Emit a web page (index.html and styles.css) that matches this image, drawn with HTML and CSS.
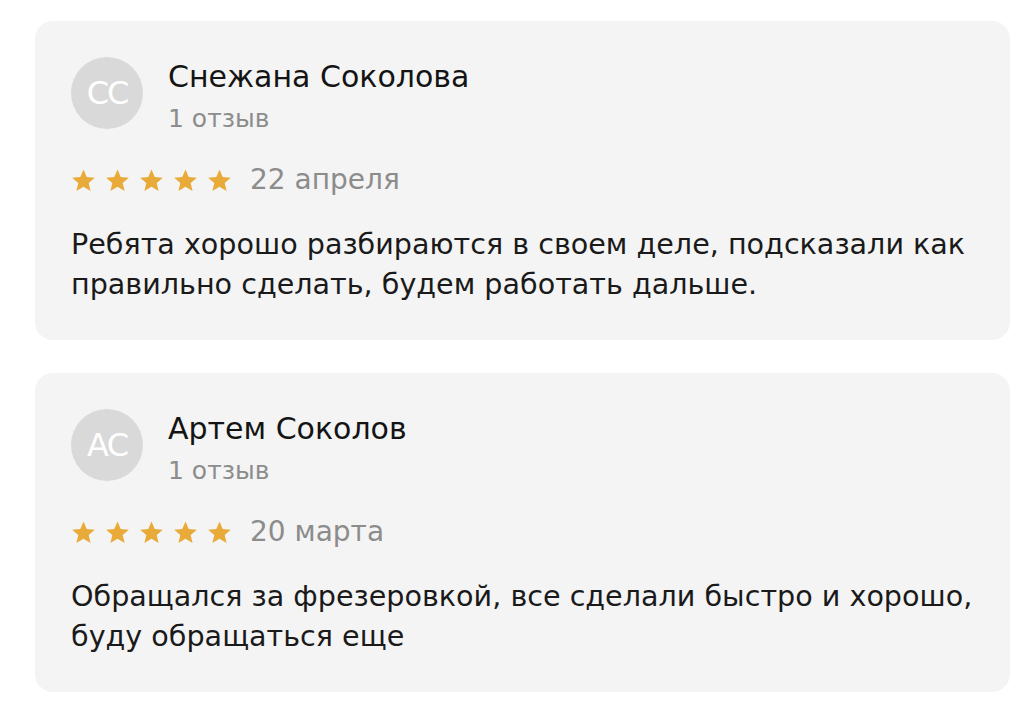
FILE: index.html
```html
<!DOCTYPE html>
<html lang="ru">
<head>
    <meta charset="UTF-8">
    <meta name="viewport" content="width=device-width, initial-scale=1.0">
    <title>Отзывы</title>
    <link rel="stylesheet" href="styles.css">
</head>
<body>
<div class="reviews">
    <div class="review-card">
        <div class="review-author">
            <div class="avatar">СС</div>
            <div class="author-info">
                <div class="author-name">Снежана Соколова</div>
                <div class="author-count">1 отзыв</div>
            </div>
        </div>
        <div class="review-meta">
            <div class="stars">
                <svg viewBox="0 0 24 24"><path d="M12 1.5l3.1 7.2 7.8.6-5.9 5.1 1.8 7.6L12 17.9 5.2 22l1.8-7.6L1.1 9.3l7.8-.6z"/></svg>
                <svg viewBox="0 0 24 24"><path d="M12 1.5l3.1 7.2 7.8.6-5.9 5.1 1.8 7.6L12 17.9 5.2 22l1.8-7.6L1.1 9.3l7.8-.6z"/></svg>
                <svg viewBox="0 0 24 24"><path d="M12 1.5l3.1 7.2 7.8.6-5.9 5.1 1.8 7.6L12 17.9 5.2 22l1.8-7.6L1.1 9.3l7.8-.6z"/></svg>
                <svg viewBox="0 0 24 24"><path d="M12 1.5l3.1 7.2 7.8.6-5.9 5.1 1.8 7.6L12 17.9 5.2 22l1.8-7.6L1.1 9.3l7.8-.6z"/></svg>
                <svg viewBox="0 0 24 24"><path d="M12 1.5l3.1 7.2 7.8.6-5.9 5.1 1.8 7.6L12 17.9 5.2 22l1.8-7.6L1.1 9.3l7.8-.6z"/></svg>
            </div>
            <span class="review-date">22 апреля</span>
        </div>
        <p class="review-text">Ребята хорошо разбираются в своем деле, подсказали как правильно сделать, будем работать дальше.</p>
    </div>

    <div class="review-card">
        <div class="review-author">
            <div class="avatar">АС</div>
            <div class="author-info">
                <div class="author-name">Артем Соколов</div>
                <div class="author-count">1 отзыв</div>
            </div>
        </div>
        <div class="review-meta">
            <div class="stars">
                <svg viewBox="0 0 24 24"><path d="M12 1.5l3.1 7.2 7.8.6-5.9 5.1 1.8 7.6L12 17.9 5.2 22l1.8-7.6L1.1 9.3l7.8-.6z"/></svg>
                <svg viewBox="0 0 24 24"><path d="M12 1.5l3.1 7.2 7.8.6-5.9 5.1 1.8 7.6L12 17.9 5.2 22l1.8-7.6L1.1 9.3l7.8-.6z"/></svg>
                <svg viewBox="0 0 24 24"><path d="M12 1.5l3.1 7.2 7.8.6-5.9 5.1 1.8 7.6L12 17.9 5.2 22l1.8-7.6L1.1 9.3l7.8-.6z"/></svg>
                <svg viewBox="0 0 24 24"><path d="M12 1.5l3.1 7.2 7.8.6-5.9 5.1 1.8 7.6L12 17.9 5.2 22l1.8-7.6L1.1 9.3l7.8-.6z"/></svg>
                <svg viewBox="0 0 24 24"><path d="M12 1.5l3.1 7.2 7.8.6-5.9 5.1 1.8 7.6L12 17.9 5.2 22l1.8-7.6L1.1 9.3l7.8-.6z"/></svg>
            </div>
            <span class="review-date">20 марта</span>
        </div>
        <p class="review-text">Обращался за фрезеровкой, все сделали быстро и хорошо, буду обращаться еще</p>
    </div>
</div>
</body>
</html>
```

FILE: styles.css
```css
body {
    font-family: 'DejaVu Sans', sans-serif;
    margin: 0;
    padding: 0;
    background-color: #ffffff;
    color: #1a1a1a;
}
.reviews {
    display: flex;
    flex-direction: column;
    gap: 33px;
    padding: 21px 0 0 35px;
}
.review-card {
    width: 975px;
    box-sizing: border-box;
    height: 319px;
    padding: 36px 20px 0 36px;
    background-color: #f4f4f4;
    border-radius: 18px;
}
.review-author {
    display: flex;
    align-items: flex-start;
    gap: 25px;
}
.avatar {
    width: 72px;
    height: 72px;
    flex-shrink: 0;
    border-radius: 50%;
    background-color: #d9d9d9;
    color: #ffffff;
    font-size: 32px;
    letter-spacing: -2px;
    display: flex;
    align-items: center;
    justify-content: center;
}
.author-name {
    font-size: 30px;
    line-height: 40px;
    color: #141414;
}
.author-count {
    font-size: 25px;
    line-height: 36px;
    margin-top: 4px;
    color: #8c8c8c;
}
.review-meta {
    display: flex;
    align-items: center;
    gap: 18px;
    margin-top: 23px;
    line-height: 40px;
}
.stars {
    display: flex;
    gap: 9px;
}
.stars svg {
    width: 25px;
    height: 25px;
    fill: #e8ab3a;
}
.review-date {
    font-size: 28px;
    color: #8c8c8c;
}
.review-text {
    margin: 24px 0 0 0;
    font-size: 28.6px;
    line-height: 40px;
    color: #1a1a1a;
}
```
